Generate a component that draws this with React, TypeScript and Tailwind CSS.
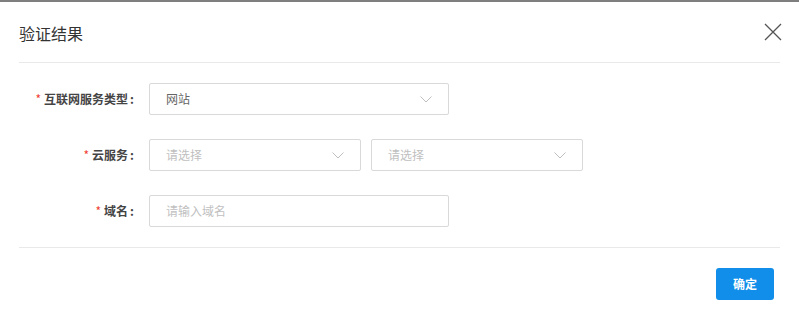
import React from "react";

const font = { fontFamily: '"Noto Sans CJK SC", "Liberation Sans", sans-serif' };

function Chevron() {
  return (
    <svg width="12" height="7" viewBox="0 0 12 7" fill="none">
      <path d="M0.5 0.5 L6 6 L11.5 0.5" stroke="#bfbfbf" strokeWidth="1" />
    </svg>
  );
}

function Select({ value, placeholder, width }: { value?: string; placeholder?: string; width: string }) {
  return (
    <div className={`${width} h-8 border border-[#d9d9d9] rounded-[2px] flex items-center justify-between pl-4 pr-4`}>
      <span className={`text-[12px] ${value ? "text-[#666]" : "text-[#bfbfbf]"}`}>{value ?? placeholder}</span>
      <Chevron />
    </div>
  );
}

function Row({ label, children }: { label: string; children: React.ReactNode }) {
  return (
    <div className="flex items-center h-8">
      <div className="w-[115px] flex justify-end items-center text-[12px] text-[#444] font-semibold">
        <span className="text-[#f04134] mr-[3px] font-normal">*</span>
        <span>{label}</span>
        <span className="ml-[2px]">:</span>
      </div>
      <div className="ml-[15px] flex gap-[10px]">{children}</div>
    </div>
  );
}

export default function App() {
  return (
    <div style={font} className="w-[799px] h-[318px] bg-white border-t-2 border-[#7f7f7f] overflow-hidden">
      <div className="px-[19px]">
        <div className="h-[61px] flex items-center justify-between border-b border-[#e9e9e9]">
          <span className="text-[16px] text-[#333] pt-[1px]">验证结果</span>
          <svg width="18" height="18" viewBox="0 0 18 18" className="mr-[-2px]">
            <path d="M1 1 L17 17 M17 1 L1 17" stroke="#555" strokeWidth="1.3" />
          </svg>
        </div>
      </div>
      <div className="px-[19px] pt-5 flex flex-col gap-6">
        <Row label="互联网服务类型">
          <Select value="网站" width="w-[300px]" />
        </Row>
        <Row label="云服务">
          <Select placeholder="请选择" width="w-[212px]" />
          <Select placeholder="请选择" width="w-[212px]" />
        </Row>
        <Row label="域名">
          <div className="w-[300px] h-8 border border-[#d9d9d9] rounded-[2px] flex items-center pl-4">
            <span className="text-[12px] text-[#bfbfbf]">请输入域名</span>
          </div>
        </Row>
      </div>
      <div className="px-[19px] mt-5">
        <div className="border-t border-[#e9e9e9] pt-5 flex justify-end pr-[6px]">
          <button className="w-[58px] h-8 bg-[#108ee9] text-white text-[12px] font-semibold rounded-[3px]">确定</button>
        </div>
      </div>
    </div>
  );
}
